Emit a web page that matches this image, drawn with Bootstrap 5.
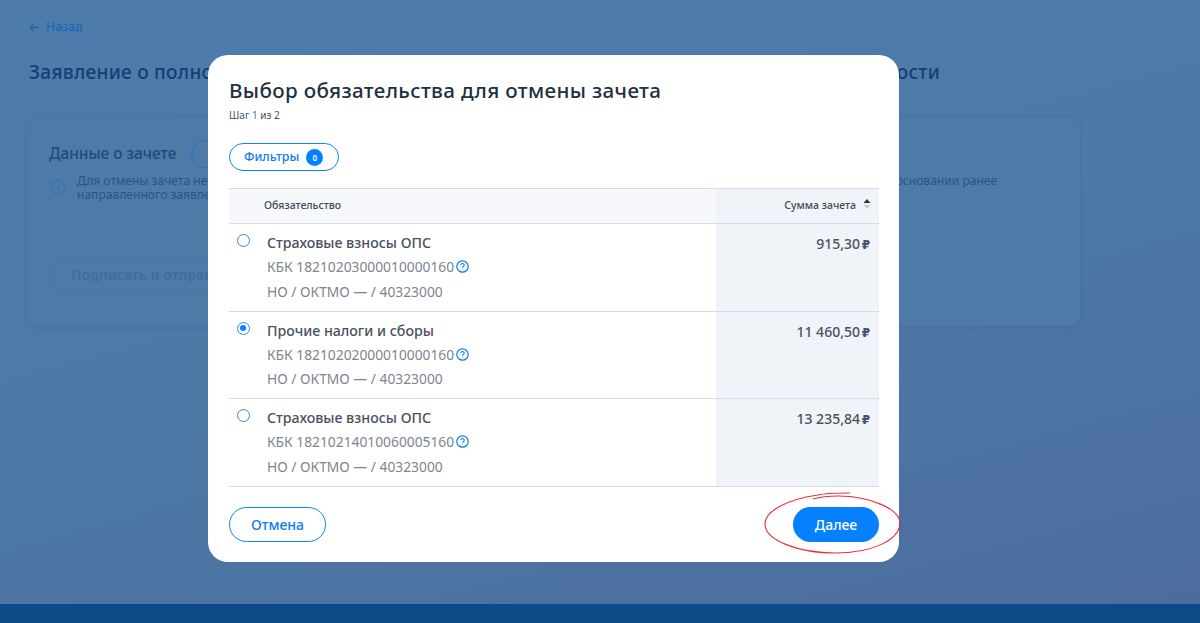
<!DOCTYPE html>
<html lang="ru">
<head>
<meta charset="utf-8">
<title>Выбор обязательства</title>
<link href="https://cdn.jsdelivr.net/npm/bootstrap@5.3.0/dist/css/bootstrap.min.css" rel="stylesheet">
<style>
html,body{height:100%;overflow:hidden}
body{font-family:"Noto Sans",sans-serif;background:linear-gradient(165deg,#4e7caa 0%,#4d79a7 50%,#4c6c9c 100%);color:#1d3557}
.page-shell{height:623px;display:flex;flex-direction:column}
.page-main{flex:1;padding:13px 0 0 29px}
.back-link{font-size:12.2px;font-weight:500;color:#1a69b4;line-height:20px;text-decoration:none}
.back-link svg{margin-right:6px;vertical-align:-1px}
.page-title{font-size:19px;font-weight:500;color:#143f74;line-height:26px;margin:22px 0 33px;white-space:nowrap;letter-spacing:.27px}
.bg-panel{width:1052px;height:208px;margin-left:-1px;background:#4e7aa8;border-radius:10px;box-shadow:0 0 6px rgba(40,70,120,.18);padding:22px 21px}
.bg-heading{font-size:15.4px;font-weight:500;color:#1f4a7c;line-height:26px}
.bg-chip{width:40px;height:28px;border:1px solid #2b74bb;border-radius:14px;margin-left:-1px}
.bg-note{font-size:12.07px;line-height:14px;color:#23568f;margin-top:6px;white-space:nowrap}
.bg-note svg{flex:none;margin:5px 3px 0 1px}
.bg-action{width:260px;height:35px;border:1px solid #4475a5;border-radius:18px;margin-top:55px;padding-left:21px;font-size:14px;font-weight:600;line-height:33px;color:#3c6e9f;white-space:nowrap}
.page-foot{height:19px;background:#0c4a88}
.dialog-layer{position:fixed;inset:0}
.dialog-box{position:absolute;left:208px;top:55px;width:691px;height:507px;background:#fff;border-radius:20px;padding:20px 20px 20px 21px;display:flex;flex-direction:column}
.dialog-title{font-size:20.6px;font-weight:500;line-height:30px;color:#212f42;margin:0;letter-spacing:.35px}
.dialog-step{font-size:10px;line-height:14px;color:#46505e;margin-top:3px}
.dialog-step b{font-weight:400;color:#2f7fc4}
.filter-btn{height:28px;width:110px;margin-top:21px;border:1px solid #0d84ff;border-radius:14px;color:#0d7bf2;background:#fff;font-size:12.4px;font-weight:500;padding:0 0 0 14px;display:flex;align-items:center;gap:7px}
.filter-count{width:17px;height:17px;border-radius:50%;background:#0580ff;color:#fff;font-size:8px;font-weight:600;line-height:17px;text-align:center}
.oblig-table{width:650px;margin:17px 0 0;border-collapse:collapse;table-layout:fixed}
.oblig-table th{height:35px;font-size:10.5px;font-weight:500;color:#3f4a58;background:#f6f8fb;border-top:1px solid #d6dbe4;border-bottom:1px solid #d6dbe4;padding:0 0 0 35px}
.oblig-table th.sum-head{background:#f0f3f8;text-align:right;padding:0 8px 0 0}
.sort-mark{display:inline-block;vertical-align:-1px;margin-left:7px}
.oblig-table td{height:87.5px;vertical-align:top;border-bottom:1px solid #d6dbe4;padding:14px 0 0}
.oblig-table td.sum-cell{background:#f0f3f8;text-align:right;font-size:14px;font-weight:500;color:#48525f;padding:9px 9px 0 0;line-height:22px}
.rub{font-family:"DejaVu Sans",sans-serif;font-size:12px;font-weight:700;margin-left:-2px}
.row-wrap{display:flex;padding-left:8px}
.pick{flex:none;width:13px;height:13px;border:1.5px solid #2a8bf2;border-radius:50%;margin-top:-4px;background:#fff;position:relative}
.pick.is-on::after{content:"";position:absolute;left:2px;top:2px;width:6px;height:6px;background:#0580ff;border-radius:50%}
.row-text{margin-left:17px;font-size:13.8px;line-height:24.3px;color:#7d858f}
.row-text strong{display:block;font-size:14.2px;font-weight:500;color:#48525f;margin-top:-7px}
.row-text svg{vertical-align:-1px;margin-left:2px}
.dialog-foot{margin-top:20px;display:flex;justify-content:space-between}
.btn-cancel,.btn-next{height:35px;border-radius:18px;font-size:14px;font-weight:500;padding:0}
.btn-cancel{width:97px;border:1px solid #0d84ff;background:#fff;color:#0d7bf2}
.btn-next{width:86px;border:0;background:#0580ff;color:#fff}
.scribble{position:absolute;left:760px;top:488px;width:145px;height:70px;pointer-events:none}
</style>
</head>
<body>
<div class="page-shell">
  <main class="page-main">
    <a class="back-link d-inline-block" href="#"><svg width="11" height="9" viewBox="0 0 11 9" fill="none" stroke="#1a69b4" stroke-width="1.4"><path d="M10 4.5H1.5M4.5 1 1 4.5 4.5 8"/></svg>Назад</a>
    <h1 class="page-title">Заявление о полной или частичной отмене зачета средств в счет исполнения их обязанности</h1>
    <section class="bg-panel">
      <div class="d-flex align-items-center gap-3">
        <div class="bg-heading">Данные о зачете</div>
        <div class="bg-chip"></div>
      </div>
      <div class="bg-note d-flex gap-2">
        <svg width="16" height="16" viewBox="0 0 17 17" fill="none" stroke="#1a72cc"><circle cx="8.5" cy="8.5" r="7.5"/><path d="M8.5 7.5v4.5M8.5 5v1"/></svg>
        <div>Для отмены зачета необходимо выбрать обязательство и сумму, которую требуется полностью отменить. Отмена зачета производится на основании ранее<br>направленного заявления</div>
      </div>
      <div class="bg-action">Подписать и отправить</div>
    </section>
  </main>
  <div class="page-foot"></div>
</div>

<div class="dialog-layer" role="dialog" aria-modal="true">
  <div class="dialog-box">
    <h2 class="dialog-title">Выбор обязательства для отмены зачета</h2>
    <div class="dialog-step">Шаг <b>1</b> из 2</div>
    <button class="filter-btn" type="button">Фильтры <span class="filter-count">0</span></button>
    <table class="oblig-table">
      <colgroup><col style="width:487px"><col style="width:163px"></colgroup>
      <thead><tr><th>Обязательство</th><th class="sum-head">Сумма зачета<svg class="sort-mark" width="8" height="12" viewBox="0 0 8 12"><path d="M4 1 7.5 5H.5Z" fill="#2b3646"/><path d="M4 11 7.5 7H.5Z" fill="#c6ccd6"/></svg></th></tr></thead>
      <tbody>
        <tr><td><div class="row-wrap"><span class="pick"></span><div class="row-text"><strong>Страховые взносы ОПС</strong>КБК 18210203000010000160<svg width="13" height="13" viewBox="0 0 13 13" fill="none" stroke="#0f7fe8" stroke-width="1.2"><circle cx="6.5" cy="6.5" r="5.7"/><path d="M4.8 5.2a1.7 1.7 0 1 1 2.5 1.5c-.6.3-.8.6-.8 1.1M6.5 9.2v.6"/></svg><br>НО / ОКТМО — / 40323000</div></div></td><td class="sum-cell">915,30 <span class="rub">₽</span></td></tr>
        <tr><td><div class="row-wrap"><span class="pick is-on"></span><div class="row-text"><strong>Прочие налоги и сборы</strong>КБК 18210202000010000160<svg width="13" height="13" viewBox="0 0 13 13" fill="none" stroke="#0f7fe8" stroke-width="1.2"><circle cx="6.5" cy="6.5" r="5.7"/><path d="M4.8 5.2a1.7 1.7 0 1 1 2.5 1.5c-.6.3-.8.6-.8 1.1M6.5 9.2v.6"/></svg><br>НО / ОКТМО — / 40323000</div></div></td><td class="sum-cell">11 460,50 <span class="rub">₽</span></td></tr>
        <tr><td><div class="row-wrap"><span class="pick"></span><div class="row-text"><strong>Страховые взносы ОПС</strong>КБК 18210214010060005160<svg width="13" height="13" viewBox="0 0 13 13" fill="none" stroke="#0f7fe8" stroke-width="1.2"><circle cx="6.5" cy="6.5" r="5.7"/><path d="M4.8 5.2a1.7 1.7 0 1 1 2.5 1.5c-.6.3-.8.6-.8 1.1M6.5 9.2v.6"/></svg><br>НО / ОКТМО — / 40323000</div></div></td><td class="sum-cell">13 235,84 <span class="rub">₽</span></td></tr>
      </tbody>
    </table>
    <div class="dialog-foot">
      <button class="btn-cancel" type="button">Отмена</button>
      <button class="btn-next" type="button">Далее</button>
    </div>
  </div>
  <svg class="scribble" viewBox="0 0 145 70" fill="none" stroke="#f02a36" stroke-width="1.1" aria-hidden="true">
    <path d="M90 5C78 5 66 5 58 7 30 11 5 22 5 36 5 53 40 65 75 65 112 65 140 52 140 35 140 22 112 8 78 8 68 8 60 9 53 11"/>
  </svg>
</div>
</body>
</html>
